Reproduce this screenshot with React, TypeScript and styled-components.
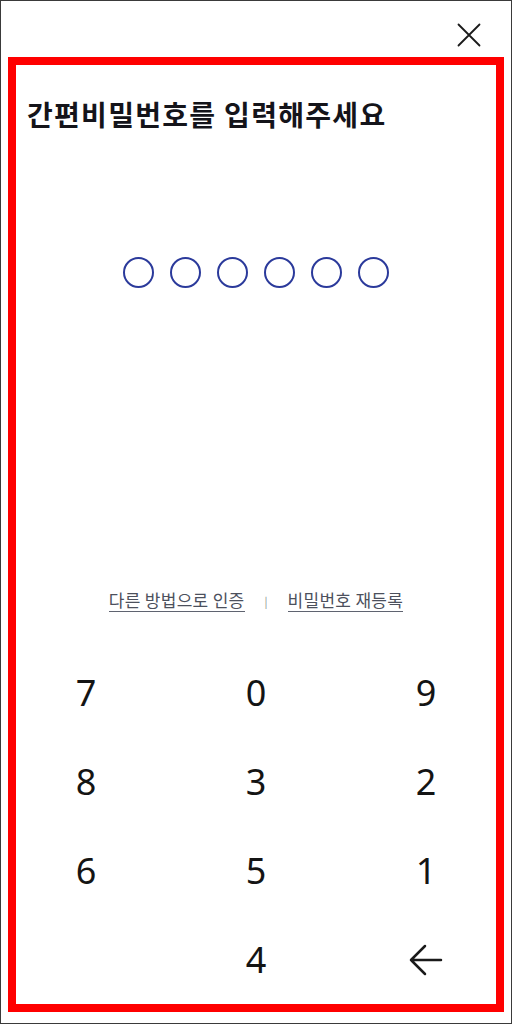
import styled, { createGlobalStyle } from 'styled-components';

const GlobalStyle = createGlobalStyle`
  html, body {
    margin: 0;
    padding: 0;
    background: #ffffff;
  }
  * {
    box-sizing: border-box;
  }
`;

// Outer page shell
const Page = styled.div`
  width: 512px;
  height: 1024px;
  border: 1px solid #3a3a3a;
  background: #ffffff;
  display: flex;
  flex-direction: column;
  font-family: 'Noto Sans CJK KR', 'Noto Sans', sans-serif;
`;

const Header = styled.header`
  height: 56px;
  display: flex;
  justify-content: flex-end;
  align-items: flex-end;
  padding-right: 20px;
`;

const CloseButton = styled.button`
  width: 44px;
  height: 44px;
  border: 0;
  padding: 0;
  background: transparent;
  display: flex;
  align-items: center;
  justify-content: center;
  color: #1a1a1a;
`;

// Highlighted content frame
const Frame = styled.main`
  flex: 1;
  margin: 0 7px 11px 7px;
  border: 8px solid #ff0000;
  display: flex;
  flex-direction: column;
`;

const Title = styled.h1`
  margin: 31px 0 0 11px;
  font-size: 28px;
  line-height: 36px;
  font-weight: 700;
  color: #14141a;
  letter-spacing: 1.3px;
`;

const PinRow = styled.div`
  margin-top: 125px;
  display: flex;
  justify-content: center;
  gap: 16px;
`;

const PinDot = styled.span<{ $filled?: boolean }>`
  width: 31px;
  height: 31px;
  border-radius: 50%;
  border: 2px solid #2b3a9b;
  background: ${(p) => (p.$filled ? '#2b3a9b' : 'transparent')};
`;

const Spacer = styled.div`
  flex: 1;
`;

const LinkRow = styled.nav`
  display: flex;
  justify-content: center;
  align-items: center;
  gap: 20px;
  margin-bottom: 36px;
`;

const TextLink = styled.a`
  font-size: 17px;
  line-height: 21px;
  color: #4c505c;
  text-decoration: none;
  border-bottom: 1.5px solid #5f6370;
  padding-bottom: 1px;
  letter-spacing: 0.3px;
`;

const Divider = styled.span`
  font-size: 11px;
  color: #8a8a8a;
  line-height: 20px;
`;

const Keypad = styled.div`
  display: grid;
  grid-template-columns: repeat(3, 100px);
  grid-auto-rows: 89px;
  column-gap: 70px;
  justify-content: center;
`;

const Key = styled.button`
  border: 0;
  padding: 0;
  background: transparent;
  display: flex;
  align-items: center;
  justify-content: center;
  font-family: 'Noto Sans', 'Open Sans', sans-serif;
  font-size: 36px;
  font-weight: 400;
  color: #141414;
`;

const keys = ['7', '0', '9', '8', '3', '2', '6', '5', '1', '', '4'];

export default function App() {
  return (
    <>
      <GlobalStyle />
      <Page>
        <Header>
          <CloseButton aria-label="닫기">
            <svg width="24" height="24" viewBox="0 0 24 24" fill="none" stroke="currentColor" strokeWidth="1.8" strokeLinecap="round">
              <path d="M1.5 1.5 L22.5 22.5 M22.5 1.5 L1.5 22.5" />
            </svg>
          </CloseButton>
        </Header>
        <Frame>
          <Title>간편비밀번호를 입력해주세요</Title>
          <PinRow>
            {Array.from({ length: 6 }).map((_, i) => (
              <PinDot key={i} />
            ))}
          </PinRow>
          <Spacer />
          <LinkRow>
            <TextLink>다른 방법으로 인증</TextLink>
            <Divider>|</Divider>
            <TextLink>비밀번호 재등록</TextLink>
          </LinkRow>
          <Keypad>
            {keys.map((k, i) => (
              <Key key={i} disabled={k === ''}>{k}</Key>
            ))}
            <Key aria-label="지우기">
              <svg width="34" height="32" viewBox="0 0 34 32" fill="none" stroke="#1a1a1a" strokeWidth="2.5" strokeLinecap="round" strokeLinejoin="round">
                <path d="M32 16 H2 M16 2 L2 16 L16 30" />
              </svg>
            </Key>
          </Keypad>
        </Frame>
      </Page>
    </>
  );
}
